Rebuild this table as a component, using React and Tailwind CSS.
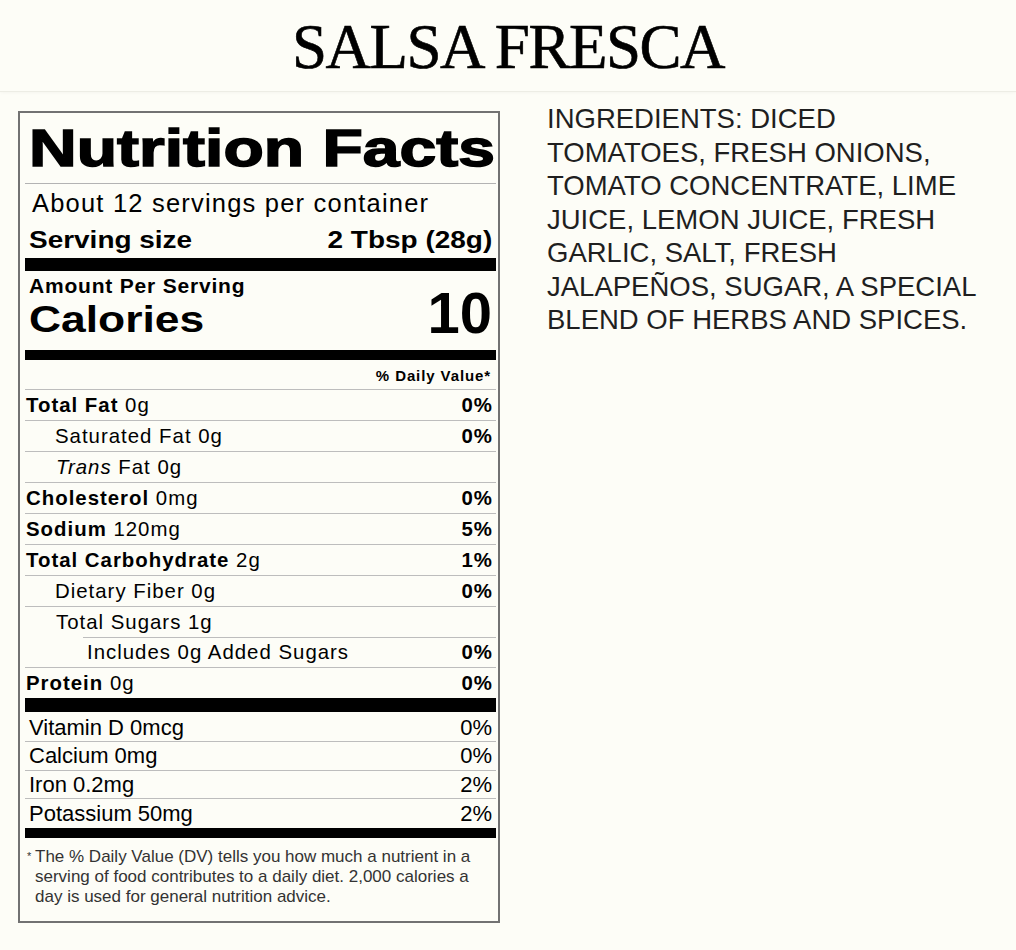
import React from "react";

const Row = ({ children, right, cls = "h-[31px] border-b border-[#bdbdbd]", pl = "pl-[1px]" }) => (
  <div className={`flex justify-between items-start leading-[30px] text-[20.4px] tracking-[1px] pr-[3px] ${cls}`}>
    <div className={`whitespace-nowrap ${pl}`}>{children}</div>
    {right ? <div className="font-bold">{right}</div> : null}
  </div>
);

const VRow = ({ label, value, cls }) => (
  <div className={`flex justify-between pl-[4px] pr-[4px] text-[22px] whitespace-nowrap ${cls}`}>
    <span>{label}</span>
    <span>{value}</span>
  </div>
);

export default function App() {
  return (
    <div className="w-[1016px] h-[950px] overflow-hidden bg-[#fdfdf7] text-black font-['Liberation_Sans',Arial,sans-serif]">
      <header className="h-[92px] border-b border-[#edede5] shadow-[0_1px_3px_rgba(0,0,0,0.03)] pt-[16px] text-center">
        <h1 className="font-['Liberation_Serif','Times_New_Roman',serif] text-[63px] leading-[63px] tracking-[-1.5px] text-black [-webkit-text-stroke:0.6px_black]">
          SALSA FRESCA
        </h1>
      </header>

      <div className="flex items-start">
        {/* Nutrition label */}
        <div className="ml-[18px] mt-[19px] w-[482px] h-[812px] border-2 border-[#727272] pl-[5px] pr-[2px] flex flex-col">
          <div className="pt-[8px] pb-[8px] border-b border-[#b3b3b3] pl-[4px]">
            <div className="h-[54px] leading-[54px] text-[52px] font-bold whitespace-nowrap">
              <span className="inline-block origin-left scale-x-[1.27] [-webkit-text-stroke:1.5px_black]">
                Nutrition Facts
              </span>
            </div>
          </div>

          <div className="mt-[4px] h-[30px] leading-[30px] text-[25.5px] tracking-[1.2px] pl-[7px] whitespace-nowrap">
            About 12 servings per container
          </div>

          <div className="mt-[8px] h-[28px] leading-[28px] text-[23.3px] font-bold flex justify-between pl-[4px] pr-[4px] whitespace-nowrap">
            <span className="inline-block origin-left scale-x-[1.2]">Serving size</span>
            <span className="inline-block origin-right scale-x-[1.2]">2 Tbsp (28g)</span>
          </div>

          <div className="mt-[4px] h-[13px] bg-black" />

          <div className="flex justify-between items-end">
            <div className="flex flex-col pl-[4px]">
              <div className="mt-[3px] h-[24px] leading-[24px] text-[21px] font-bold tracking-[0.8px] whitespace-nowrap">
                Amount Per Serving
              </div>
              <div className="mt-[3px] h-[38px] leading-[38px] text-[37px] font-bold whitespace-nowrap">
                <span className="inline-block origin-left scale-x-[1.2]">Calories</span>
              </div>
            </div>
            <div className="pr-[4px] text-[58px] leading-[52px] font-bold">10</div>
          </div>

          <div className="mt-[11px] h-[10px] bg-black" />

          <div className="h-[30px] border-b border-[#bdbdbd] leading-[31px] text-[15px] font-bold tracking-[0.9px] text-right pr-[5px]">
            % Daily Value*
          </div>

          <Row right="0%">
            <b>Total Fat</b> 0g
          </Row>
          <Row right="0%" pl="pl-[30px]">
            Saturated Fat 0g
          </Row>
          <Row pl="pl-[31px]">
            <i>Trans</i> Fat 0g
          </Row>
          <Row right="0%">
            <b>Cholesterol</b> 0mg
          </Row>
          <Row right="5%">
            <b>Sodium</b> 120mg
          </Row>
          <Row right="1%">
            <b>Total Carbohydrate</b> 2g
          </Row>
          <Row right="0%" pl="pl-[30px]">
            Dietary Fiber 0g
          </Row>
          <Row cls="h-[30px]" pl="pl-[31px]">
            Total Sugars 1g
          </Row>
          <div className="h-[31px] border-b border-[#bdbdbd]">
            <div className="ml-[58px] h-[30px] border-t border-[#bdbdbd] flex justify-between leading-[29px] text-[20.4px] tracking-[1px] pl-[4px] pr-[3px] whitespace-nowrap">
              <span>Includes 0g Added Sugars</span>
              <span className="font-bold">0%</span>
            </div>
          </div>
          <Row right="0%" cls="h-[30px]">
            <b>Protein</b> 0g
          </Row>

          <div className="h-[14px] bg-black" />

          <VRow label="Vitamin D 0mcg" value="0%" cls="h-[30px] border-b border-[#bdbdbd] pt-[2px] leading-[27px]" />
          <VRow label="Calcium 0mg" value="0%" cls="h-[29px] border-b border-[#bdbdbd] leading-[28px]" />
          <VRow label="Iron 0.2mg" value="2%" cls="h-[28px] border-b border-[#bdbdbd] leading-[27px]" />
          <VRow label="Potassium 50mg" value="2%" cls="h-[29px] leading-[29px]" />

          <div className="h-[10px] bg-black" />

          <div className="pt-[9px] pl-[2px] flex text-[#333]">
            <span className="w-[8px] text-[11px] leading-[14px] pt-[2px]">*</span>
            <p className="text-[17px] leading-[20px] whitespace-nowrap">
              The % Daily Value (DV) tells you how much a nutrient in a
              <br />
              serving of food contributes to a daily diet. 2,000 calories a
              <br />
              day is used for general nutrition advice.
            </p>
          </div>
        </div>

        {/* Ingredients */}
        <div className="ml-[47px] mt-[10px] text-[27.5px] leading-[33.5px] text-[#1f1f1f] whitespace-nowrap">
          INGREDIENTS: DICED
          <br />
          TOMATOES, FRESH ONIONS,
          <br />
          TOMATO CONCENTRATE, LIME
          <br />
          JUICE, LEMON JUICE, FRESH
          <br />
          GARLIC, SALT, FRESH
          <br />
          JALAPEÑOS, SUGAR, A SPECIAL
          <br />
          BLEND OF HERBS AND SPICES.
        </div>
      </div>
    </div>
  );
}
